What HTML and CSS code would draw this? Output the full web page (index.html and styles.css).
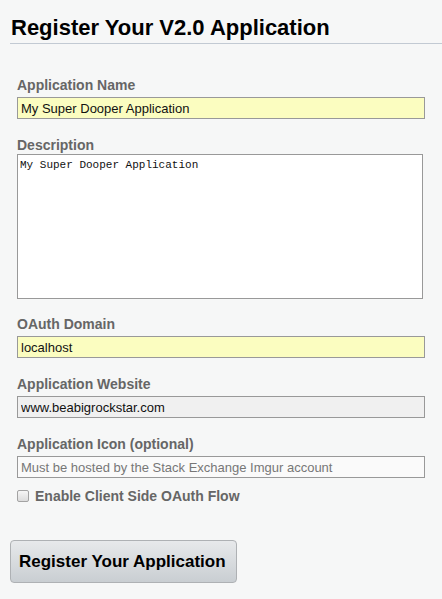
FILE: index.html
```html
<!DOCTYPE html>
<html lang="en">
<head>
<meta charset="utf-8">
<title>Register Your V2.0 Application</title>
<link rel="stylesheet" href="styles.css">
</head>
<body>
<div class="page">
  <h1 class="title">Register Your V2.0 Application</h1>
  <form class="form">
    <div class="field">
      <label class="label" for="name">Application Name</label>
      <input class="input input-filled" id="name" type="text" value="My Super Dooper Application">
    </div>
    <div class="field field-area">
      <label class="label" for="desc">Description</label>
      <textarea class="area" id="desc">My Super Dooper Application</textarea>
    </div>
    <div class="field">
      <label class="label" for="domain">OAuth Domain</label>
      <input class="input input-filled" id="domain" type="text" value="localhost">
    </div>
    <div class="field">
      <label class="label" for="site">Application Website</label>
      <input class="input input-grey" id="site" type="text" value="www.beabigrockstar.com">
    </div>
    <div class="field">
      <label class="label" for="icon">Application Icon (optional)</label>
      <input class="input input-plain" id="icon" type="text" placeholder="Must be hosted by the Stack Exchange Imgur account">
    </div>
    <div class="check-row">
      <input class="check" id="client" type="checkbox">
      <label class="check-label" for="client">Enable Client Side OAuth Flow</label>
    </div>
    <button class="submit" type="button">Register Your Application</button>
  </form>
</div>
</body>
</html>
```

FILE: styles.css
```css
html, body {
  margin: 0;
  padding: 0;
  background: #f6f7f7;
}

body {
  font-family: Arial, "Liberation Sans", sans-serif;
  color: #000;
}

.page {
  padding-left: 10px;
}

.title {
  margin: 0;
  padding: 15px 0 3px 1px;
  font-size: 22px;
  line-height: 25px;
  font-weight: bold;
  color: #000;
  border-bottom: 1px solid #c2cad3;
}

.form {
  display: flex;
  flex-direction: column;
  align-items: flex-start;
  padding: 33px 0 0 7px;
}

.field {
  display: flex;
  flex-direction: column;
  gap: 4px;
  margin-bottom: 18px;
}

.field-area {
  gap: 1px;
  margin-bottom: 17px;
}

.label {
  display: block;
  font-size: 14px;
  line-height: 16px;
  font-weight: bold;
  color: #666;
}

.input {
  box-sizing: border-box;
  width: 408px;
  height: 22px;
  margin: 0;
  padding: 0 3px;
  border: 1px solid #999;
  border-radius: 0;
  font-family: Arial, "Liberation Sans", sans-serif;
  font-size: 13px;
  color: #111;
  outline: none;
}

.input-filled {
  background: #fbfdc0;
}

.input-grey {
  background: #f0f0f0;
}

.input-plain {
  background: #fafafa;
}

.input-plain::placeholder {
  color: #777;
  opacity: 1;
}

.area {
  box-sizing: border-box;
  display: block;
  width: 406px;
  height: 145px;
  margin: 0;
  padding: 4px 2px 2px;
  border: 1px solid #999;
  border-radius: 0;
  background: #fff;
  font-family: "Liberation Mono", "DejaVu Sans Mono", monospace;
  font-size: 11px;
  line-height: 13px;
  color: #111;
  resize: none;
  outline: none;
}

.check-row {
  display: flex;
  align-items: center;
  gap: 6px;
  margin-top: -8px;
  height: 16px;
}

.check {
  appearance: none;
  -webkit-appearance: none;
  box-sizing: border-box;
  width: 12px;
  height: 12px;
  margin: 0;
  border: 1px solid #a3a3a3;
  border-radius: 2px;
  background: linear-gradient(#f6f6f6, #dcdcdc);
}

.check-label {
  font-size: 14px;
  line-height: 16px;
  font-weight: bold;
  color: #666;
}

.submit {
  margin: 36px 0 0 -7px;
  padding: 11px 10px 10px 8px;
  border: 1px solid #aeb1b4;
  border-radius: 4px;
  background: linear-gradient(#e7e9eb, #c9ced2);
  font-family: Arial, "Liberation Sans", sans-serif;
  font-size: 17px;
  line-height: 20px;
  font-weight: bold;
  color: #000;
  cursor: pointer;
}
```
